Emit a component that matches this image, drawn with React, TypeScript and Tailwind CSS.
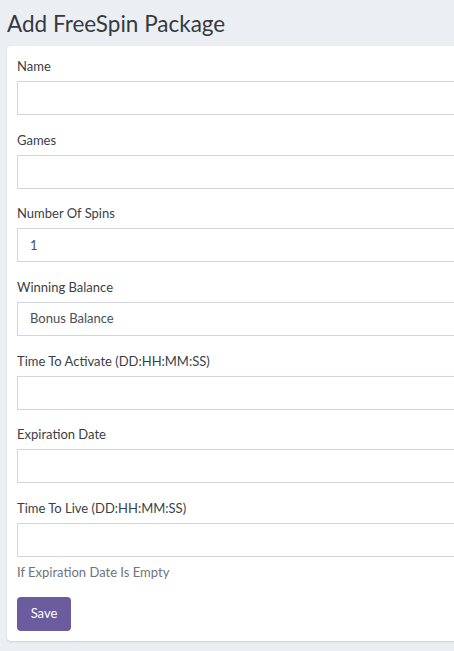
import React from "react";

const fields: { label: string; value?: string }[] = [
  { label: "Name" },
  { label: "Games" },
  { label: "Number Of Spins", value: "1" },
  { label: "Winning Balance", value: "Bonus Balance" },
  { label: "Time To Activate (DD:HH:MM:SS)" },
  { label: "Expiration Date" },
  { label: "Time To Live (DD:HH:MM:SS)" },
];

export default function App() {
  return (
    <div
      className="w-[454px] h-[651px] overflow-hidden bg-[#ebeef3] text-[#3a3f45]"
      style={{ fontFamily: "Lato, 'Noto Sans', sans-serif" }}
    >
      <h1 className="pl-[7px] pt-[9px] h-[46px] text-[22.5px] leading-[30px] font-normal text-[#343a40]">
        Add FreeSpin Package
      </h1>
      <div className="ml-[7px] w-[480px] bg-white rounded-[4px] shadow-[0_1px_2px_rgba(0,0,0,0.12)] px-[10px] pt-[10px] pb-[10px]">
        {fields.map((f, i) => (
          <div key={f.label} className={i === fields.length - 1 ? "" : "mb-[14.67px]"}>
            <div className="h-[21px] text-[13px] leading-[21px] mb-[4px] text-[#3a3f45]">{f.label}</div>
            <div className="h-[34px] border border-[#d3d4dc] bg-white flex items-center px-[12px] text-[13px] text-[#495057]">
              {f.value ?? ""}
            </div>
          </div>
        ))}
        <div className="mt-[5px] h-[21px] text-[13px] leading-[21px] text-[#6c757d]">If Expiration Date Is Empty</div>
        <button className="mt-[14px] h-[34px] w-[54px] rounded-[4px] bg-[#6a5c9f] text-white text-[13px] flex items-center justify-center">
          Save
        </button>
      </div>
    </div>
  );
}
